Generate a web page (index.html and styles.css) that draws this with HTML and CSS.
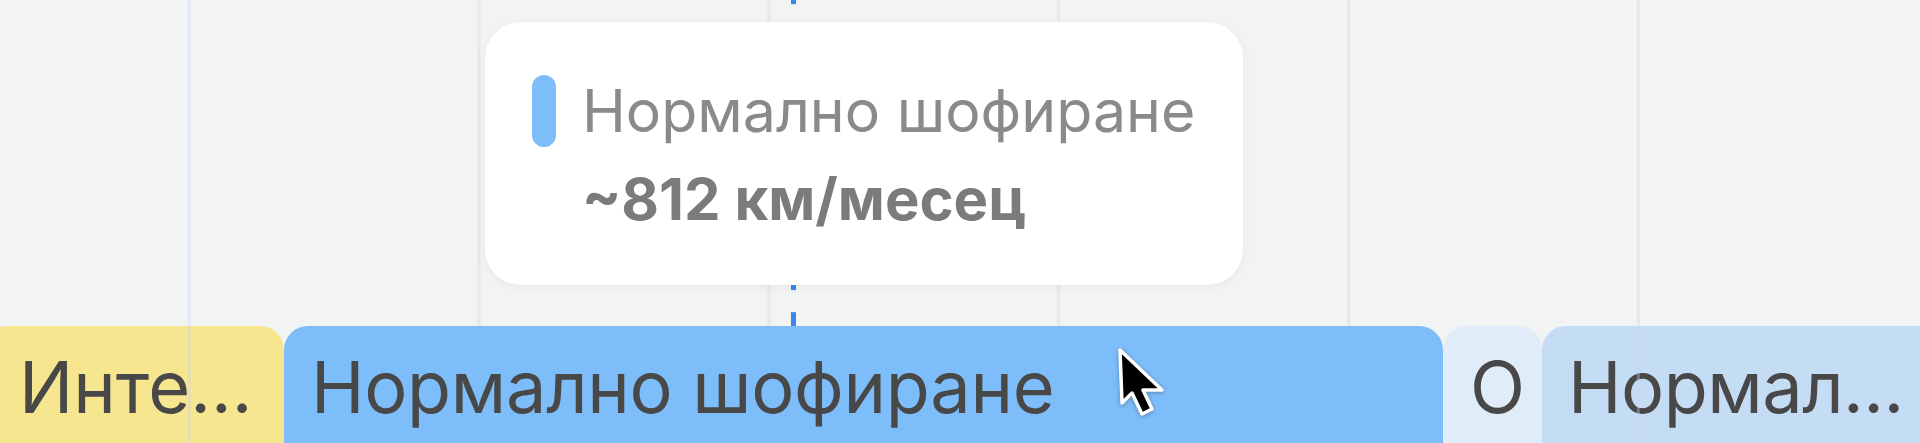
FILE: index.html
```html
<!DOCTYPE html>
<html lang="bg">
<head>
<meta charset="utf-8">
<title>Timeline</title>
<link rel="stylesheet" href="styles.css">
</head>
<body>
<div class="chart">
  <div class="crosshair"></div>
  <div class="bars">
    <div class="bar bar-yellow">Инте...</div>
    <div class="bar bar-blue">Нормално шофиране</div>
    <div class="bar bar-pale">О</div>
    <div class="bar bar-light">Нормал...</div>
  </div>
  <div class="grid"></div>
  <div class="tooltip">
    <div class="tooltip-head">
      <span class="swatch"></span>
      <span class="tooltip-title">Нормално шофиране</span>
    </div>
    <div class="tooltip-value">~812 км/месец</div>
  </div>
  <svg class="cursor" width="52" height="74" viewBox="0 0 52 74">
    <polygon points="4,4 6,57 16,47 26,68 36,63 27,44 46,44" fill="#000" stroke="#fff" stroke-width="3.5" stroke-linejoin="round"/>
  </svg>
</div>
</body>
</html>
```
FILE: styles.css
```css
html, body {
  margin: 0;
  padding: 0;
}
body {
  width: 1920px;
  height: 443px;
  overflow: hidden;
  font-family: Inter, "Noto Sans", sans-serif;
}
.chart {
  position: relative;
  width: 1920px;
  height: 443px;
  overflow: hidden;
  background: #f2f3f3;
  display: flex;
  flex-direction: column;
  justify-content: flex-end;
}
.bars {
  display: flex;
  height: 117px;
  margin-left: -17px;
}
.bar {
  flex: none;
  box-sizing: border-box;
  height: 117px;
  padding: 25px 0 0 29px;
  font-size: 72px;
  line-height: 72px;
  color: #484848;
  white-space: nowrap;
  overflow: hidden;
  border-radius: 24px 24px 0 0;
}
.bar-yellow {
  width: 301px;
  background: #f6e68f;
  padding-left: 36px;
}
.bar-blue {
  width: 1159px;
  background: #7dbdf9;
  position: relative;
  z-index: 3;
  padding-left: 27px;
  letter-spacing: -0.3px;
}
.bar-pale {
  width: 99px;
  background: #e0edf8;
  padding-left: 27px;
}
.bar-light {
  width: 400px;
  background: #c4ddf5;
  padding-left: 26px;
  letter-spacing: -0.5px;
}
.grid {
  position: absolute;
  inset: 0;
  z-index: 2;
  pointer-events: none;
  background-image: linear-gradient(to right, rgba(205, 210, 238, 0.36) 0 3px, transparent 3px);
  background-size: 289.8px 100%;
  background-position: -102px 0;
  background-repeat: repeat-x;
}
.crosshair {
  position: absolute;
  left: 791px;
  top: 0;
  width: 5px;
  height: 340px;
  background-image: repeating-linear-gradient(to bottom, #3a86f0 0 18.86px, transparent 18.86px 40.86px);
  background-position: 0 -14.86px;
}
.tooltip {
  position: absolute;
  z-index: 4;
  left: 485px;
  top: 22px;
  width: 758px;
  height: 263px;
  box-sizing: border-box;
  padding: 53px 0 0 47px;
  background: #fff;
  border-radius: 36px;
  box-shadow: 0 2px 10px rgba(0, 0, 0, 0.05);
}
.tooltip-head {
  display: flex;
  align-items: center;
  gap: 26px;
}
.swatch {
  flex: none;
  width: 24px;
  height: 72px;
  border-radius: 12px;
  background: #7dbdf9;
}
.tooltip-title {
  font-size: 59px;
  line-height: 72px;
  color: #8a8a8a;
}
.tooltip-value {
  margin: 22px 0 0 50px;
  font-size: 58px;
  line-height: 60px;
  font-weight: 700;
  color: #7b7b7b;
}
.cursor {
  position: absolute;
  z-index: 5;
  left: 1116px;
  top: 346px;
  filter: drop-shadow(0 1px 2px rgba(0, 0, 0, 0.3));
}
```
